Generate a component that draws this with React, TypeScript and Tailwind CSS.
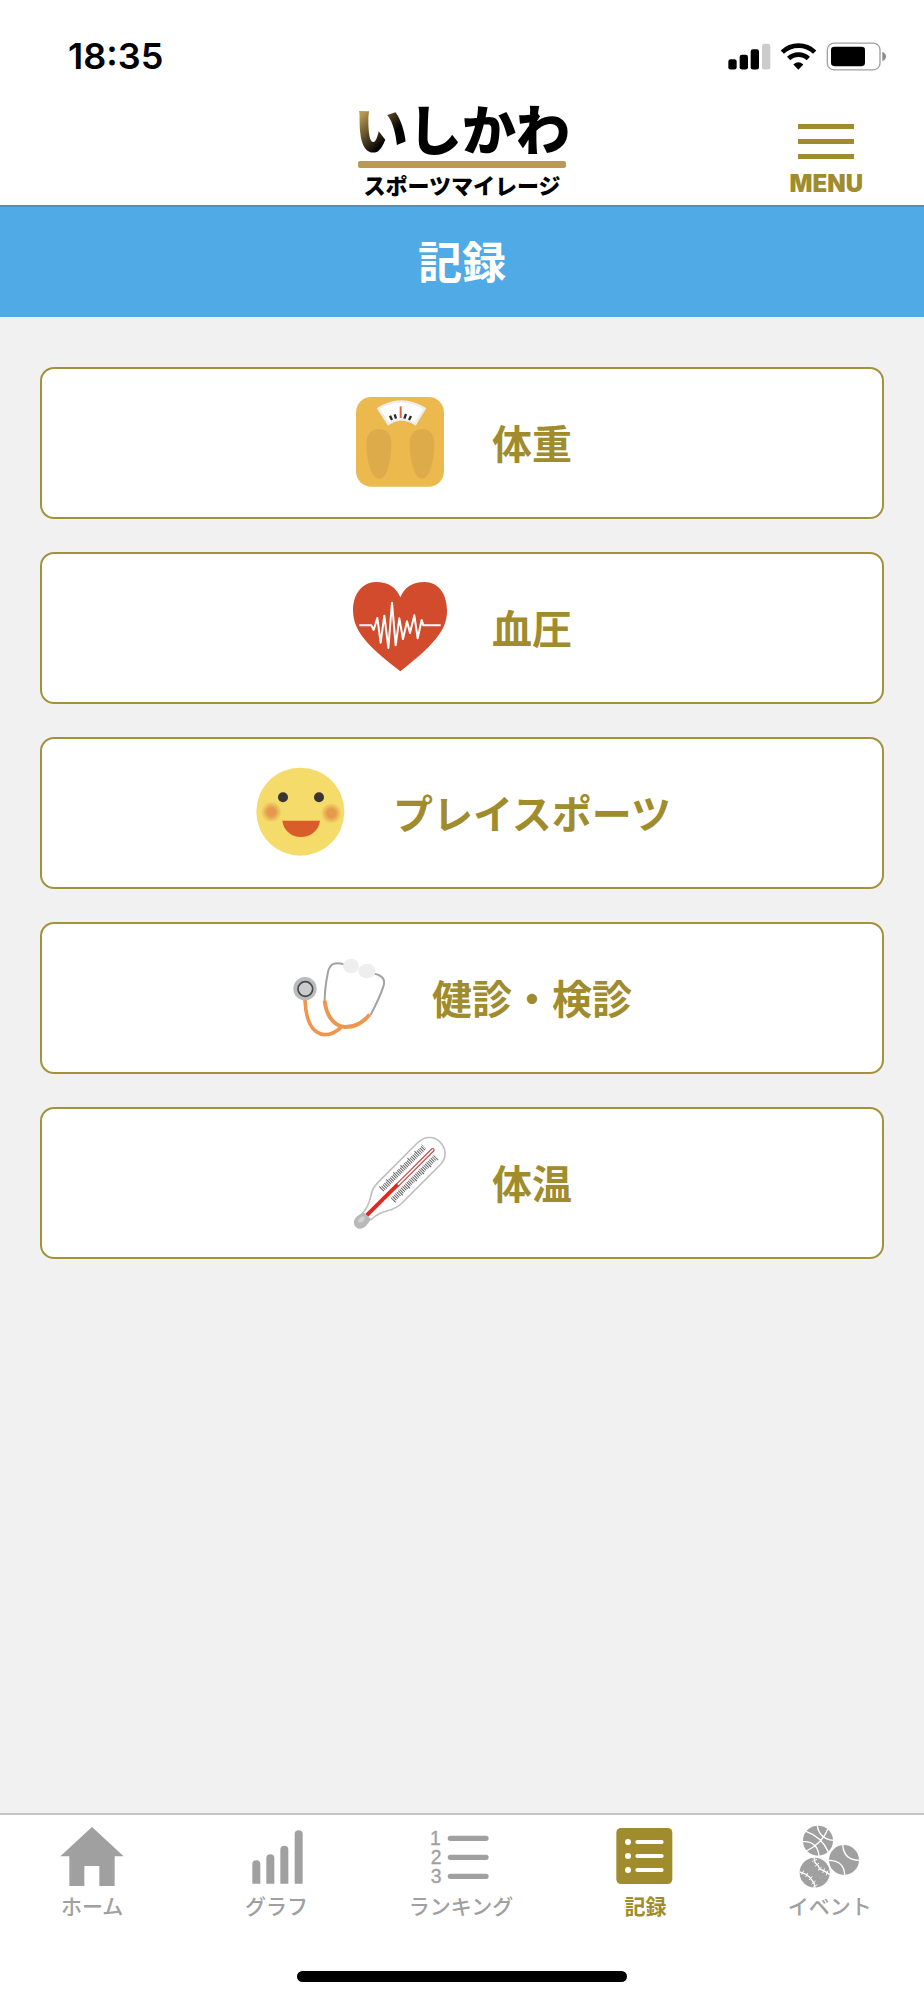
import type { ReactNode } from 'react';

type IconProps = {
    viewBox: string;
    className?: string;
    children: ReactNode;
};

const Icon = ({ viewBox, className = 'size-16', children }: IconProps) => (
    <svg viewBox={viewBox} className={className} aria-hidden="true">
        {children}
    </svg>
);

const CARD_ICON = 'size-[94px] shrink-0 overflow-visible';

const ScaleIcon = () => (
    <Icon viewBox="66 78 282 282" className={CARD_ICON}>
        <rect x="78" y="81" width="264" height="269" rx="46" fill="#ecb94f" />
        <path d="M140 115Q213 67 289 115L257 167Q214 138 174 167Z" fill="#ededed" />
        <path d="M149 117Q213 78 280 117L254 157Q214 134 177 157Z" fill="#fff" />
        <path d="M180 137l6 13M194 133l4 13M223 146l5 -14M237 150l6 -12" stroke="#2d2a2a" strokeWidth="7" />
        <path d="M212 109V144" stroke="#e2663c" strokeWidth="6" />
        <path d="M147 177C170 177 184 194 184 220C184 262 174 326 148 326C121 326 109 262 109 220C109 194 124 177 147 177Z" fill="#ddab49" />
        <path d="M276 177C299 177 313 194 313 220C313 262 302 326 276 326C250 326 239 262 239 220C239 194 253 177 276 177Z" fill="#ddab49" />
    </Icon>
);

const HeartIcon = () => (
    <Icon viewBox="66 63 282 282" className={CARD_ICON}>
        <path
            d="M211 112C224 82 246 66 284 66C324 66 350 100 351 150C352 185 338 212 317 237C288 272 252 301 211 334C169 301 130 271 103 237C82 211 69 185 69 150C70 100 98 66 138 66C176 66 198 82 211 112Z"
            fill="#d34b2d"
        />
        <path
            d="M88 196H124L131 210L142 174L152 248L163 167L175 264L186 128L197 256L208 175L219 237L231 184L240 219L253 166L263 235L275 180L280 196H332"
            fill="none"
            stroke="#fff"
            strokeWidth="6"
            strokeLinejoin="round"
        />
    </Icon>
);

const SmileIcon = () => (
    <Icon viewBox="39 63 282 282" className={CARD_ICON}>
        <defs>
            <radialGradient id="cheek">
                <stop offset="0.4" stopColor="#e59a4b" />
                <stop offset="1" stopColor="#e59a4b" stopOpacity="0" />
            </radialGradient>
        </defs>
        <circle cx="181" cy="200" r="132" fill="#f4db6a" />
        <circle cx="129" cy="157" r="15" fill="#3a3433" />
        <circle cx="237" cy="157" r="15" fill="#3a3433" />
        <circle cx="94" cy="201" r="31" fill="url(#cheek)" />
        <circle cx="274" cy="205" r="31" fill="url(#cheek)" />
        <path d="M127 227H240C236 258 210 276 183 276C156 276 131 258 127 227Z" fill="#d95d2b" />
    </Icon>
);

const StethoscopeIcon = () => (
    <Icon viewBox="66 33 282 282" className={CARD_ICON}>
        <g fill="none">
            <path d="M164 184C164 150 169 120 174 96C179 72 194 64 222 73" stroke="#a0a2a4" strokeWidth="6" />
            <path d="M312 101C338 105 347 120 340 140C330 170 316 198 302 224" stroke="#a0a2a4" strokeWidth="6" />
            <path d="M105 180C107 232 122 282 166 284C186 284 200 274 213 262" stroke="#f0954c" strokeWidth="11" />
            <path d="M164 182C168 222 188 258 224 261C256 262 284 244 299 223" stroke="#f0954c" strokeWidth="12" />
        </g>
        <ellipse cx="243" cy="78" rx="24" ry="22" fill="#eee" />
        <ellipse cx="291" cy="93" rx="26" ry="22" fill="#eee" />
        <circle cx="105" cy="146" r="35" fill="#b9bbbd" />
        <circle cx="106" cy="147" r="22" fill="#c9cbcd" stroke="#47484a" strokeWidth="5" />
    </Icon>
);

const ThermometerIcon = () => (
    <Icon viewBox="66 48 282 282" className={CARD_ICON}>
        <path
            d="M100 277C122 252 120 230 127 212C131 201 138 193 147 184L262 69C281 50 308 46 328 64C350 84 350 112 333 132L216 249C208 258 198 264 186 268C162 275 142 280 122 300"
            fill="#fff"
            stroke="#bfbfbf"
            strokeWidth="5"
        />
        <g stroke="#666">
            <path d="M155 209L283 81" strokeWidth="16" strokeDasharray="3 3" />
            <path d="M149 203L277 75" strokeWidth="7" strokeDasharray="3 27" />
            <path d="M188 240L317 111" strokeWidth="16" strokeDasharray="3 3" />
            <path d="M194 246L323 117" strokeWidth="7" strokeDasharray="3 27" />
        </g>
        <path d="M204 194L308 90" stroke="#c9484a" strokeWidth="12" strokeLinecap="round" />
        <path d="M204 194L308 90" stroke="#fff" strokeWidth="5" strokeLinecap="round" />
        <path d="M110 286L203 194" stroke="#dd2a1f" strokeWidth="12" />
        <path d="M99 275L124 298C116 306 113 313 107 319C96 330 81 328 74 317C69 307 71 297 80 290C86 285 92 281 99 275Z" fill="#b9b9b9" />
        <path d="M84 306C84 294 98 288 104 290C104 302 96 312 84 306Z" fill="#d2d2d2" />
    </Icon>
);

const HomeIcon = () => (
    <Icon viewBox="178 72 192 192">
        <path d="M274 81L369 169H342V258H296V198H251V258H206V169H179Z" fill="currentColor" />
    </Icon>
);

const GraphIcon = () => (
    <Icon viewBox="734 72 192 192">
        <path
            d="M756 251V193a12 12 0 0 1 24 0V251ZM798 251V175a12 12 0 0 1 24 0V251ZM840 251V149a12 12 0 0 1 24 0V251ZM883 251V103a12 12 0 0 1 24 0V251Z"
            fill="currentColor"
        />
    </Icon>
);

const RankingIcon = () => (
    <Icon viewBox="1287 72 192 192">
        <g
            fill="currentColor"
            stroke="currentColor"
            strokeWidth="1"
            fontSize="58"
            className="font-['Liberation_Sans',sans-serif] font-normal"
        >
            <text x="1290" y="135">1</text>
            <text x="1292" y="193">2</text>
            <text x="1292" y="250">3</text>
        </g>
        <path d="M1351 115H1458M1351 172H1458M1351 229H1458" stroke="currentColor" strokeWidth="16" strokeLinecap="round" />
    </Icon>
);

const RecordIcon = () => (
    <Icon viewBox="455 72 192 192">
        <rect x="465" y="84" width="168" height="168" rx="14" fill="currentColor" />
        <path d="M528 126H601M528 168H601M528 210H601" stroke="#fff" strokeWidth="12" strokeLinecap="round" />
        <g fill="#fff">
            <circle cx="500" cy="126" r="9" />
            <circle cx="500" cy="168" r="9" />
            <circle cx="500" cy="210" r="9" />
        </g>
    </Icon>
);

const EventIcon = () => (
    <Icon viewBox="1009 72 192 192">
        <g fill="currentColor">
            <circle cx="1069" cy="122" r="45" />
            <circle cx="1147" cy="180" r="45" />
            <circle cx="1059" cy="218" r="45" />
        </g>
        <g fill="none" stroke="#fff" strokeWidth="4">
            {/* basketball */}
            <path d="M1033 94C1062 104 1086 124 1100 156" />
            <path d="M1099 86C1088 114 1066 138 1034 153" />
            <path d="M1067 76C1069 100 1086 118 1115 121" />
            <path d="M1023 125C1052 122 1070 140 1072 168" />
            {/* tennis ball */}
            <path d="M1143 134C1145 165 1162 181 1193 181M1101 181C1132 181 1148 195 1149 226" />
            {/* baseball */}
            <path d="M1057 172L1060 188L1069 196L1074 207L1086 212L1104 223M1014 216L1031 222L1044 232L1052 242L1058 252L1060 264" />
            <path
                d="M1052 184L1066 178M1060 199L1072 189M1069 211L1080 201M1083 219L1089 205M1094 226L1099 212M1020 224L1026 212M1032 231L1038 219M1042 240L1052 229M1050 252L1062 243M1054 262L1067 254"
                strokeWidth="3"
            />
        </g>
    </Icon>
);

const records = [
    { label: '体重', icon: <ScaleIcon /> },
    { label: '血圧', icon: <HeartIcon /> },
    { label: 'プレイスポーツ', icon: <SmileIcon /> },
    { label: '健診・検診', icon: <StethoscopeIcon /> },
    { label: '体温', icon: <ThermometerIcon /> },
];

const tabs = [
    { label: 'ホーム', icon: <HomeIcon /> },
    { label: 'グラフ', icon: <GraphIcon /> },
    { label: 'ランキング', icon: <RankingIcon /> },
    { label: '記録', icon: <RecordIcon />, active: true },
    { label: 'イベント', icon: <EventIcon /> },
];

const StatusBar = () => (
    <div className="flex h-[100px] items-center justify-between pt-3 pr-[38px] pl-[68px]">
        <span className="font-['Inter',sans-serif] text-[36px] leading-none font-semibold">18:35</span>
        <svg viewBox="84 63 474 86" className="h-[29px] w-[158px]" aria-hidden="true">
            <rect x="85" y="114" width="25" height="31" rx="7" />
            <rect x="119" y="101" width="25" height="44" rx="7" />
            <rect x="152" y="84" width="25" height="61" rx="7" />
            <rect x="186" y="68" width="25" height="77" rx="7" fill="#ccc" />
            <g fill="none" stroke="#000" strokeWidth="14">
                <path d="M247 93A70 70 0 0 1 344 93" />
                <path d="M266 112A43 43 0 0 1 325 112" />
            </g>
            <path d="M280 130Q295 116 310 130L295 146Z" />
            <rect x="382" y="66" width="158" height="80" rx="20" fill="none" stroke="#a0a0a0" strokeWidth="4" />
            <rect x="393" y="77" width="102" height="58" rx="10" />
            <path d="M547 92Q558 97 558 106T547 120Z" fill="#8c8c8c" />
        </svg>
    </div>
);

const Logo = () => (
    <a href="#" className="flex flex-col items-center text-black">
        <span className="bg-[linear-gradient(135deg,#b8994f_8%,#000_27%)] bg-clip-text text-[54px] leading-[56px] font-black text-transparent">
            いしかわ
        </span>
        <span className="mt-[5px] h-[7px] w-[208px] rounded-xs bg-[#b89a54]" />
        <span className="text-[22px] leading-[32px] font-black">スポーツマイレージ</span>
    </a>
);

const Header = () => (
    <header className="grid h-[105px] grid-cols-[1fr_auto_1fr] items-start">
        <div />
        <Logo />
        <button type="button" className="mt-6 mr-[61px] flex flex-col items-center justify-self-end text-[#a08c2c]">
            <span className="flex flex-col gap-[10px]">
                <span className="h-[5px] w-14 bg-current" />
                <span className="h-[5px] w-14 bg-current" />
                <span className="h-[5px] w-14 bg-current" />
            </span>
            <span className="mt-3 font-['Inter',sans-serif] text-2xl leading-[26px] font-black">MENU</span>
        </button>
    </header>
);

export default function App() {
    return (
        <div className="flex min-h-screen flex-col bg-white font-['Noto_Sans_CJK_JP',sans-serif] text-black">
            <StatusBar />
            <Header />

            <h1 className="flex h-28 items-center justify-center border-t-2 border-[#4692c2] bg-[#4faae5] pb-1 text-[44px] leading-none font-bold text-white">
                記録
            </h1>

            <main className="flex flex-1 flex-col gap-[33px] bg-[#f1f1f1] px-10 py-[50px]">
                {records.map(({ label, icon }) => (
                    <button
                        key={label}
                        type="button"
                        className="flex h-[152px] items-center justify-center gap-[46px] rounded-[14px] border-2 border-[#a4923a] bg-white text-[40px] leading-none font-bold text-[#a08c2c]"
                    >
                        {icon}
                        <span className="pb-[3px]">{label}</span>
                    </button>
                ))}
            </main>

            <nav className="border-t-2 border-[#c4c4c4] bg-white pt-[9px]">
                <div className="grid grid-cols-5 pr-[2px]">
                    {tabs.map(({ label, icon, active }) => (
                        <a
                            key={label}
                            href="#"
                            aria-current={active ? 'page' : undefined}
                            className={`flex flex-col items-center gap-[2px] text-[21px] leading-[30px] ${active ? 'font-bold text-[#a08c2c]' : 'font-medium text-[#a0a0a0]'}`}
                        >
                            {icon}
                            {label}
                        </a>
                    ))}
                </div>
                <div className="mx-auto mt-[51px] mb-[18px] h-[11px] w-[330px] rounded-full bg-black" />
            </nav>
        </div>
    );
}
